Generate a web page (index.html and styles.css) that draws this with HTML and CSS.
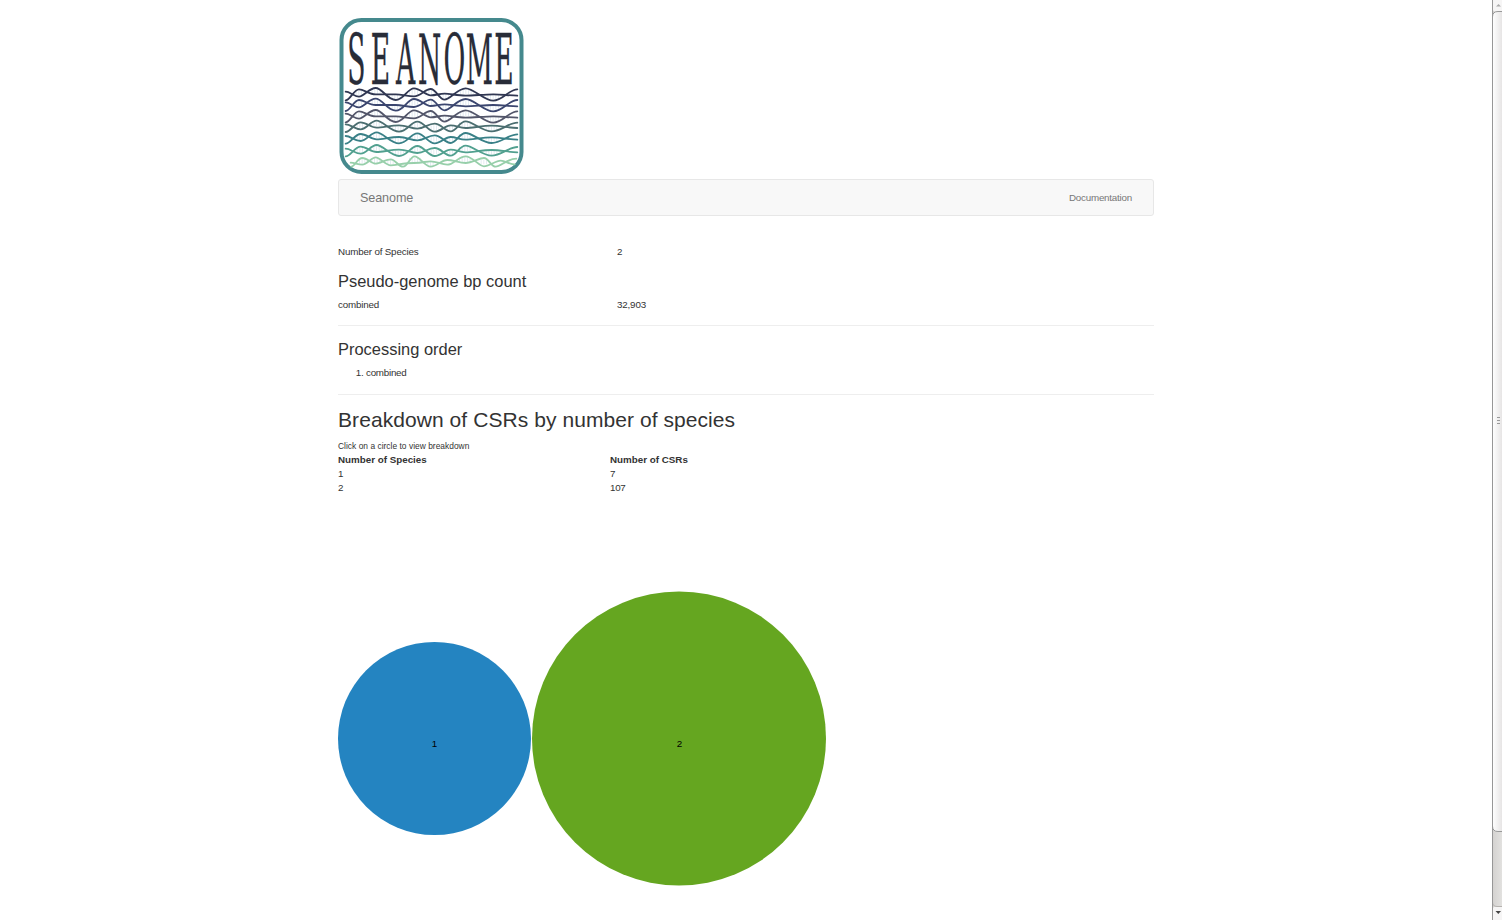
FILE: index.html
```html
<!DOCTYPE html>
<html lang="en">
<head>
<meta charset="utf-8">
<title>Seanome</title>
<link rel="stylesheet" href="styles.css">
</head>
<body>
<div class="page">
<main class="container">
<svg class="logo" viewBox="338 14 190 165" role="img" aria-label="Seanome">
  <defs>
    <g id="swell">
      <path class="rungs" d="M65 -4H85M105 -9H145M165 8H208M225 -6H257M275 -6H304M318 7H345M370 -7H420M460 9H500"/>
      <path d="M35 18C48 18 60 -15 75 -15S105 0 125 0S165 0 185 0S220 6 240 6S273 -16 290 -16S315 16 332 16S370 -18 395 -18S450 19 478 19S525 -15 550 -15"/>
      <path d="M35 -8C48 -8 60 7 75 7S105 -19 125 -19S160 17 185 17S220 -18 240 -18S273 3 290 3S315 -2 332 -2S370 4 395 4S450 0 478 0S525 4 550 4"/>
    </g>
    <g id="ripple">
      <path class="rungs" d="M68 -3H92M110 -8H147M175 6H215M233 -5H266M290 3H315M338 5H363M375 -6H415M455 6H492"/>
      <path d="M35 16C50 16 62 -13 80 -13S110 3 128 3S170 -4 195 -4S230 6 250 6S282 -9 302 -9S332 14 350 14S375 -16 395 -16S445 14 473 14S525 -12 550 -12"/>
      <path d="M35 -7C50 -7 62 8 80 8S110 -18 128 -18S170 15 195 15S230 -15 250 -15S282 15 302 15S332 -4 350 -4S375 4 395 4S445 -3 473 -3S525 4 550 4"/>
    </g>
  </defs>
  <rect class="logo-frame" x="341.500" y="20" width="180" height="152" rx="20"/>
  <g transform="translate(334 84) scale(.3333)" class="waves">
    <use href="#swell" y="31" class="w1"/>
    <use href="#swell" y="63" class="w2"/>
    <use href="#swell" y="97" class="w3"/>
    <use href="#ripple" y="128" class="w4"/>
    <use href="#ripple" y="163" class="w5"/>
    <use href="#ripple" y="201" class="w6"/>
    <g class="w7" transform="translate(0 234)">
      <path class="rungs" d="M75 -2H97M112 -4H140M160 1H182M225 -6H260M280 6H300M375 -7H415M440 0H462"/>
      <path d="M52 14C62 14 70 -12 85 -12S112 5 125 5S155 -8 170 -8S192 14 207 14S227 -17 242 -17S272 14 290 14S322 -6 340 -6S375 3 395 3S435 -12 450 -12S470 14 485 14S520 -10 547 -10"/>
      <path d="M50 2C62 2 70 8 85 8S112 -14 125 -14S155 10 170 10S210 3 240 3S272 -2 290 -2S322 8 340 8S375 -17 395 -17S435 13 450 13S485 -4 500 -4S525 8 542 7"/>
    </g>
  </g>
  <text class="wordmark" transform="translate(334 83.500) scale(.38 1)" x="35 97 163 221 288 347 422" y="0">SEANOME</text>
</svg>
<nav class="navbar"><a class="brand">Seanome</a><a class="doc">Documentation</a></nav>
<div class="row species"><span>Number of Species</span><span>2</span></div>
<h3 class="first">Pseudo-genome bp count</h3>
<div class="row"><span>combined</span><span>32,903</span></div>
<hr>
<h3>Processing order</h3>
<ol><li>combined</li></ol>
<hr class="second">
<h2>Breakdown of CSRs by number of species</h2>
<p class="hint">Click on a circle to view breakdown</p>
<div class="table">
  <b>Number of Species</b><b>Number of CSRs</b>
  <span>1</span><span>7</span>
  <span>2</span><span class="total">107</span>
</div>
<svg class="chart" width="490" height="400" viewBox="0 0 490 400">
  <circle class="one" cx="96.500" cy="243.500" r="96.500"/>
  <circle class="two" cx="341" cy="243.500" r="147"/>
  <text x="96.500" y="252">1</text>
  <text x="341.500" y="252">2</text>
</svg>
</main>
<aside class="scrollbar">
  <svg width="10" height="920" viewBox="0 0 10 920">
    <defs>
      <linearGradient id="thumb"><stop offset="0" stop-color="#fff"/><stop offset="1" stop-color="#e4e2e2"/></linearGradient>
      <linearGradient id="track"><stop offset="0" stop-color="#d3d1cf"/><stop offset="1" stop-color="#e2e1df"/></linearGradient>
    </defs>
    <rect width="10" height="920" fill="url(#track)"/>
    <path d="M.5 0V8Q.5 11.500 4 11.500H10V0zM.5 920V910Q.5 906.500 4 906.500H10V920z" fill="#f6f5f5"/>
    <path d="M.5 902Q.5 906.500 5 906.500H10" fill="none" stroke="#b5b2af"/>
    <path d="M.5 826V17Q.5 11.500 6 11.500H11V831.500H6Q.5 831.500 .5 826z" fill="url(#thumb)" stroke="#999"/>
    <path d="M.5 0V920" stroke="#979797"/>
    <path d="M4 6.500L6.500 4L9 6.500z" fill="#aaa"/>
    <path d="M3.500 911H9L6.300 914z" fill="#444"/>
    <path d="M5 417.500H8M5 420.500H8M5 423.500H8" stroke="#999"/>
  </svg>
</aside>
</div>
</body>
</html>
```
FILE: styles.css
```css
* { box-sizing: border-box; }
body { margin: 0; background: #fff; color: #333; font: 9.8px/14px "Liberation Sans", Arial, sans-serif; overflow: hidden; }
.page { display: flex; height: 920px; }
.container { width: 816px; margin-left: 338px; padding-top: 14px; }
.scrollbar { margin-left: auto; width: 10px; }
svg { display: block; }
.logo { width: 190px; height: 165px; }
.logo-frame { fill: #fff; stroke: #45898d; stroke-width: 4; }
.waves { fill: none; stroke-width: 5.5; stroke-linecap: round; }
.rungs { stroke: #e3ebf2; stroke-width: 14; stroke-dasharray: 3 5; stroke-linecap: butt; }
.w1 { stroke: #303752; }
.w2 { stroke: #3b466f; }
.w3 { stroke: #53566a; }
.w4 { stroke: #4b6e70; }
.w5 { stroke: #398087; }
.w6 { stroke: #51a08f; }
.w7 { stroke: #97cfaa; }
.wordmark { font: 70px "DejaVu Serif", serif; fill: #282c38; stroke: #282c38; stroke-width: .4; }
.navbar { display: flex; justify-content: space-between; align-items: center; height: 37px; padding: 0 21px; background: #f8f8f8; border: 1px solid #e7e7e7; border-radius: 3px; color: #777; }
.brand { font-size: 12.6px; letter-spacing: -.1px; }
.doc { letter-spacing: -.22px; }
.row { display: grid; grid-template-columns: 279px 1fr; height: 14px; letter-spacing: -.17px; }
.species { margin-top: 29px; }
h2, h3 { margin: 0; font-weight: normal; }
h3 { margin-top: 14px; margin-bottom: 8px; font-size: 16.45px; line-height: 18px; }
.first { margin-top: 13px; }
hr { margin: 13px 0 14px; border: 0; border-top: 1px solid #eee; }
ol { margin: 0; padding-left: 28px; letter-spacing: -.25px; }
.second { margin: 14px 0 13px; }
h2 { font-size: 21px; line-height: 23px; letter-spacing: .07px; }
.hint { margin: 8px 0 0; font-size: 8.4px; letter-spacing: .03px; }
.table { display: grid; grid-template-columns: 272px 1fr; }
.total { letter-spacing: -.3px; }
.chart text { font-size: 9.8px; text-anchor: middle; fill: #000; }
.one { fill: #2484c1; }
.two { fill: #65a620; }
```
